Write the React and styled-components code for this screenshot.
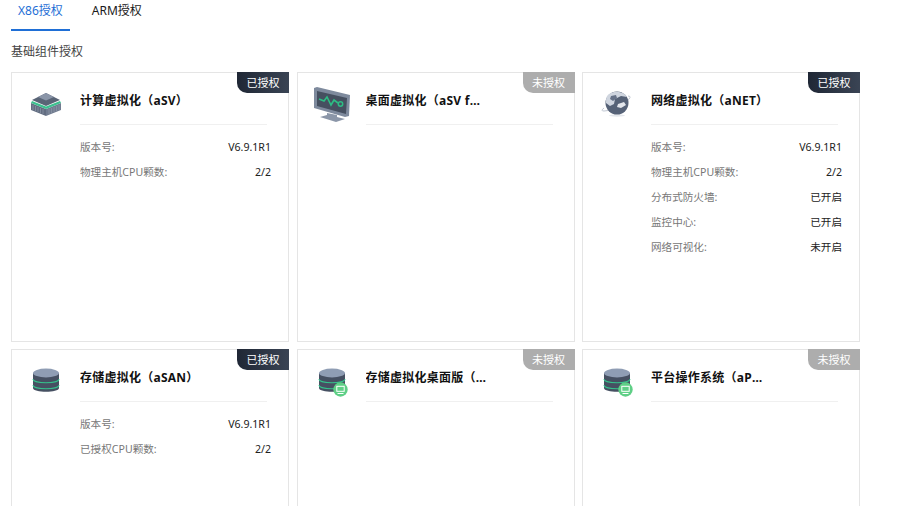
import styled, { createGlobalStyle } from 'styled-components'

const GlobalStyle = createGlobalStyle`
  html, body {
    margin: 0;
    padding: 0;
    background: #fff;
  }
  body {
    font-family: "Noto Sans", "Noto Sans CJK SC", sans-serif;
    font-size: 10.6px;
    color: #1a1a1a;
  }
`

function ChipIcon() {
  return (
    <svg width="32" height="24" viewBox="0 0 32 24">
      <path d="M1 11 L16 17 L16 24 L1 18 Z" fill="#626d81" />
      <path d="M31 11 L16 17 L16 24 L31 18 Z" fill="#717c90" />
      <path d="M3 13v5M5.5 14v5M8 15v5M10.5 16v5M13 17v5M19 17v5M21.5 16v5M24 15v5M26.5 14v5M29 13v5" stroke="#8f99aa" strokeWidth="0.7" />
      <path d="M2 9 L16 14.5 L30 9 L31 11 L16 17 L1 11 Z" fill="#3cc08f" />
      <path d="M16 1 L30 8 L16 14 L2 8 Z" fill="#596476" />
      <path d="M16 1 L24 5 L16 8.5 L8 5 Z" fill="#8a95a8" />
    </svg>
  )
}

function MonitorIcon() {
  return (
    <svg width="36" height="35" viewBox="0 0 36 35">
      <path d="M13 26 L23 28 L23 30 L31 32 L22 35 L6 30 L13 28 Z" fill="#8b96a8" />
      <path d="M0 1 L3 0 L36 8 L35 29 L31 30 L0 21 Z" fill="#7e8a9d" />
      <path d="M3 4 L33 11 L32 27 L3 19 Z" fill="#465060" />
      <path d="M5 12 L10 14 L13 10 L17 18 L20 13 L24 16" fill="none" stroke="#2dbd84" strokeWidth="1.6" />
      <circle cx="26.5" cy="17" r="2.2" fill="none" stroke="#2dbd84" strokeWidth="1.5" />
    </svg>
  )
}

function GlobeIcon() {
  return (
    <svg width="32" height="26" viewBox="0 0 32 26">
      <ellipse cx="16" cy="24.5" rx="8" ry="1.2" fill="#e4e7ec" />
      <path d="M3 17 Q-1 20 3 20 Q12 20 25 11 Q32 5 27 5" fill="none" stroke="#b9c0cc" strokeWidth="0.9" />
      <circle cx="16" cy="12" r="11.5" fill="#566277" />
      <path d="M6 5 Q11 0 18 1 Q24 2 26 6 L20 5 L14 8 L13 13 L9 15 L5 12 Q4.5 8 6 5 Z" fill="#cfd5df" />
      <path d="M10 5 L15 4 L16 7 L12 10 L9 8 Z" fill="#667288" />
      <path d="M17 13 L23 11 L25 14 L20 17 L16 16 Z" fill="#e3e6ec" />
    </svg>
  )
}

function DbIcon({ badge }) {
  return (
    <svg width="32" height="32" viewBox="0 0 32 32">
      <path d="M3 8 V23 C3 28 29 28 29 23 V8 Z" fill="#465062" />
      <path d="M3 14 C3 19 29 19 29 14 M3 20 C3 25 29 25 29 20" fill="none" stroke="#35c28c" strokeWidth="1.1" />
      <ellipse cx="16" cy="8" rx="13" ry="4.4" fill="#8f9db4" />
      {badge && (
        <g>
          <circle cx="24.5" cy="24.5" r="7.2" fill="#5fcf86" />
          <rect x="20.3" y="20.8" width="8.4" height="6" fill="#fff" />
          <rect x="21.3" y="21.8" width="6.4" height="4" fill="#5fcf86" />
          <rect x="21.5" y="28" width="6" height="1" fill="#fff" />
        </g>
      )}
    </svg>
  )
}

const cards = [
  {
    icon: <ChipIcon />,
    title: '计算虚拟化（aSV）',
    ok: true,
    rows: [['版本号:', 'V6.9.1R1'], ['物理主机CPU颗数:', '2/2']],
  },
  { icon: <MonitorIcon />, title: '桌面虚拟化（aSV for Desktop）', ok: false, rows: [] },
  {
    icon: <GlobeIcon />,
    title: '网络虚拟化（aNET）',
    ok: true,
    rows: [
      ['版本号:', 'V6.9.1R1'],
      ['物理主机CPU颗数:', '2/2'],
      ['分布式防火墙:', '已开启'],
      ['监控中心:', '已开启'],
      ['网络可视化:', '未开启'],
    ],
  },
  {
    icon: <DbIcon />,
    title: '存储虚拟化（aSAN）',
    ok: true,
    rows: [['版本号:', 'V6.9.1R1'], ['已授权CPU颗数:', '2/2']],
  },
  { icon: <DbIcon badge />, title: '存储虚拟化桌面版（aSAN for Desktop）', ok: false, rows: [] },
  { icon: <DbIcon badge />, title: '平台操作系统（aPMS Platform）', ok: false, rows: [] },
]

function App() {
  return (
    <Page>
      <GlobalStyle />
      <Tabs>
        <Tab $active>X86授权</Tab>
        <Tab>ARM授权</Tab>
      </Tabs>
      <SectionTitle>基础组件授权</SectionTitle>
      <CardGrid>
        {cards.map((card) => (
          <Card key={card.title}>
            <Badge $ok={card.ok}>{card.ok ? '已授权' : '未授权'}</Badge>
            <IconCol>{card.icon}</IconCol>
            <Body>
              <Title>{card.title}</Title>
              <Rows>
                {card.rows.map(([label, value]) => (
                  <Row key={label}>
                    <Label>{label}</Label>
                    <Value>{value}</Value>
                  </Row>
                ))}
              </Rows>
            </Body>
          </Card>
        ))}
      </CardGrid>
    </Page>
  )
}

const Page = styled.div`
  width: 923px;
  height: 506px;
  overflow: hidden;
  padding-left: 11px;
  box-sizing: border-box;
`

const Tabs = styled.div`
  display: flex;
  align-items: flex-end;
  gap: 15px;
  height: 31px;
  overflow: hidden;
`

const Tab = styled.div`
  flex: none;
  padding: 0 7px 8px;
  line-height: 20px;
  font-size: 12px;
  color: ${(p) => (p.$active ? '#1f6fd6' : '#1a1a1a')};
  border-bottom: 2px solid ${(p) => (p.$active ? '#1f6fd6' : 'transparent')};
`

const SectionTitle = styled.div`
  margin-top: 12px;
  height: 18px;
  line-height: 18px;
  font-size: 12px;
  color: #444;
`

const CardGrid = styled.div`
  display: grid;
  grid-template-columns: repeat(3, 278px);
  grid-auto-rows: 270px;
  gap: 7px 7.5px;
  margin-top: 11px;
`

const Card = styled.div`
  position: relative;
  display: flex;
  box-sizing: border-box;
  border: 1px solid #e5e5e5;
  background: #fff;
`

const Badge = styled.div`
  position: absolute;
  top: -1px;
  right: -1px;
  width: 52px;
  height: 21px;
  line-height: 22px;
  text-align: center;
  font-size: 11px;
  color: #fff;
  border-bottom-left-radius: 10px;
  background: ${(p) => (p.$ok ? 'linear-gradient(to right, #1f2735, #3a4454)' : '#adadad')};
`

const IconCol = styled.div`
  flex: none;
  width: 68px;
  height: 62px;
  display: flex;
  align-items: center;
  justify-content: center;
`

const Body = styled.div`
  flex: 1;
  min-width: 0;
  padding-right: 17px;
`

const Title = styled.div`
  max-width: 121px;
  height: 51px;
  line-height: 56px;
  font-size: 12px;
  font-weight: 700;
  letter-spacing: 0.25px;
  color: #111;
  white-space: nowrap;
  overflow: hidden;
  text-overflow: ellipsis;
`

const Rows = styled.div`
  border-top: 1px solid #f0f0f0;
  margin-right: 4px;
  padding-top: 10px;
`

const Row = styled.div`
  display: flex;
  justify-content: space-between;
  height: 25px;
  line-height: 25px;
  margin-right: -4px;
`

const Label = styled.span`
  color: #777;
`

const Value = styled.span`
  color: #222;
`

export default App
